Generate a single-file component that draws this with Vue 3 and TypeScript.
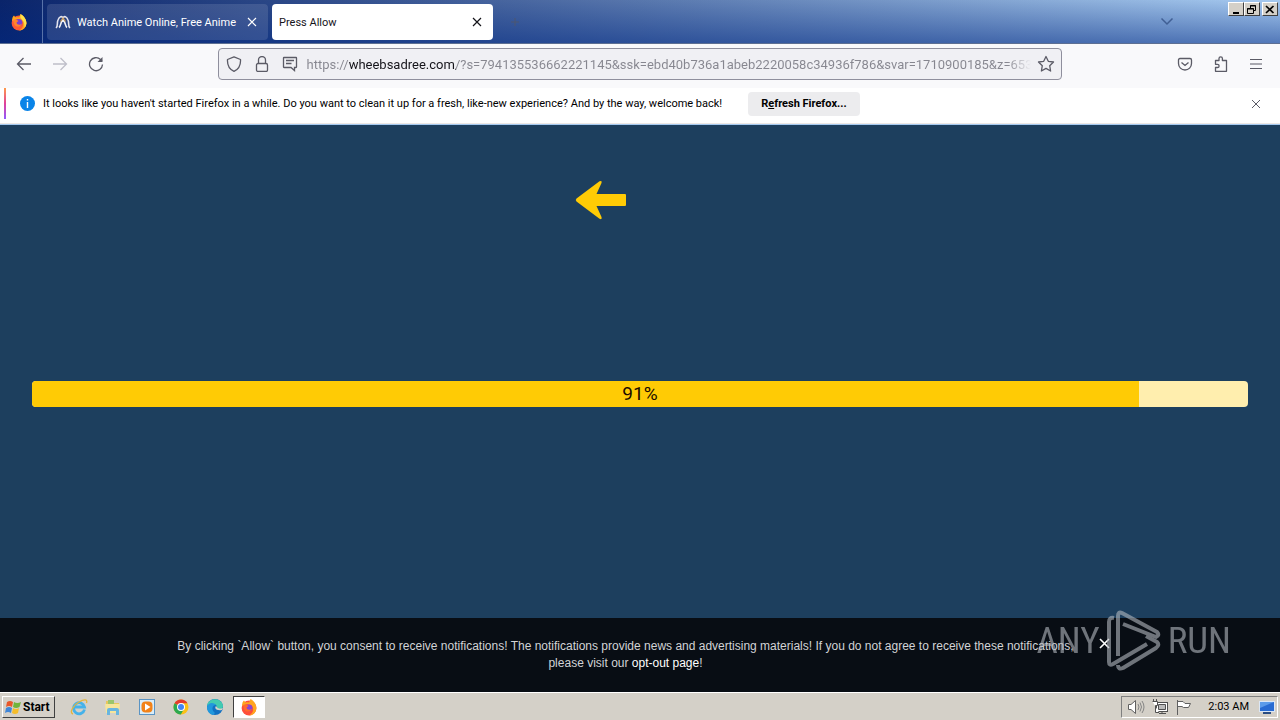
<script setup lang="ts">
import { ref } from 'vue'

const progress = ref(91)
const url = ref('https://wheebsadree.com/?s=794135536662221145&ssk=ebd40b736a1abeb2220058c34936f786&svar=1710900185&z=6534')
</script>

<template>
  <div class="desktop">
    <header class="tabbar">
      <div class="view">
        <svg width="18" height="18" viewBox="0 0 18 18">
          <circle cx="9" cy="10" r="7.4" fill="#ff5a36" />
          <path d="M2 8C2 5 3 3 4 2.500L5.500 4.500C7 4 8 4 9 4.500L10.500 1C13.500 2.500 16.500 6 16.400 10.500C16 15 12.500 17.500 9 17.500C13 15.500 14 12 12.500 8.500L11 7L7 6L4.500 7Z" fill="#ffa51f" />
          <path d="M10.500 1C13.500 2.500 16.500 6 16.400 10.500C16 12.500 15.500 13.500 14.500 14.500C15 10 13 7 10.500 5Z" fill="#ffe14a" />
          <circle cx="8.800" cy="9.600" r="3.500" fill="#7b3fd0" />
          <path d="M3 7C5 6 7 6.500 8.500 8L6.500 9.500C7 12 10 12.500 12 10.500C11 14 6 15 4 11Z" fill="#ff842c" />
        </svg>
      </div>
      <div class="tab tab-idle">
        <svg class="favicon" width="16" height="16" viewBox="0 0 16 16" fill="none">
          <path d="M1 14C3.500 12 1.500 9 3 6C4.500 2 7 2 8 4C9 2 11.500 2 13 6C14.500 9 12.500 12 15 14" stroke="#e4e4ee" stroke-width="1.600" />
          <path d="M4 13.500C6 12 5 9 8 6C11 9 10 12 12 13.500" stroke="#f2f2f6" stroke-width="1.600" />
          <path d="M5.500 7.500L8 4L10.500 7.500" stroke="#cf9d56" stroke-width="1.200" />
        </svg>
        <span class="tab-title">Watch Anime Online, Free Anime</span>
        <button class="icon-btn" aria-label="Close tab">
          <svg width="10" height="10" viewBox="0 0 10 10"><path d="M1 1L9 9M9 1L1 9" stroke="currentColor" stroke-width="1.200" /></svg>
        </button>
      </div>
      <div class="tab tab-active">
        <span class="tab-title">Press Allow</span>
        <button class="icon-btn" aria-label="Close tab">
          <svg width="10" height="10" viewBox="0 0 10 10"><path d="M1 1L9 9M9 1L1 9" stroke="currentColor" stroke-width="1.200" /></svg>
        </button>
      </div>
      <button class="icon-btn new-tab" aria-label="New tab">
        <svg width="12" height="12" viewBox="0 0 12 12"><path d="M6 2V10M2 6H10" stroke="currentColor" /></svg>
      </button>
      <button class="icon-btn list-tabs" aria-label="List all tabs">
        <svg width="14" height="9" viewBox="0 0 14 9" fill="none"><path d="M1.500 1.500L7 7L12.500 1.500" stroke="currentColor" stroke-width="1.500" /></svg>
      </button>
      <div class="window-buttons">
        <button class="win" aria-label="Minimize"><svg width="10" height="9" viewBox="0 0 10 9"><path d="M2 8H8" stroke="#000" stroke-width="2" /></svg></button>
        <button class="win" aria-label="Restore"><svg width="10" height="9" viewBox="0 0 10 9" fill="none" stroke="#000"><path d="M3.500 3V.500H8.500V5.500H7M3 1H9M.500 3.500H6.500V8.500H.500ZM0 4H7" /></svg></button>
        <button class="win win-close" aria-label="Close"><svg width="10" height="9" viewBox="0 0 10 9"><path d="M1 1L8.500 8M8.500 1L1 8" stroke="#000" stroke-width="1.700" /></svg></button>
      </div>
    </header>

    <nav class="toolbar">
      <div class="nav-buttons">
        <button class="icon-btn" aria-label="Back"><svg width="16" height="16" viewBox="0 0 16 16" fill="none" stroke="currentColor" stroke-width="1.300"><path d="M15 8H1.500M7.500 2L1.500 8L7.500 14" /></svg></button>
        <button class="icon-btn" aria-label="Forward" disabled><svg width="16" height="16" viewBox="0 0 16 16" fill="none" stroke="currentColor" stroke-width="1.300"><path d="M1 8H14.500M8.500 2L14.500 8L8.500 14" /></svg></button>
        <button class="icon-btn" aria-label="Reload"><svg width="16" height="16" viewBox="0 0 16 16" fill="none" stroke="currentColor" stroke-width="1.300"><path d="M14.500 8.500A6.500 6.500 0 1 1 12.500 3.500L14 5" /><path d="M14.500 1V6H9.500Z" fill="currentColor" stroke="none" /></svg></button>
      </div>
      <div class="urlbar">
        <svg width="16" height="16" viewBox="0 0 16 16" fill="none" stroke="currentColor" stroke-width="1.300"><path d="M8 .800L14.500 3.500C14.800 8.500 13 13 8 15.300C3 13 1.200 8.500 1.500 3.500Z" stroke-linejoin="round" /></svg>
        <svg width="16" height="16" viewBox="0 0 16 16" fill="none" stroke="currentColor" stroke-width="1.300"><rect x="2.500" y="7.500" width="11" height="8" rx="1.500" /><path d="M4.500 7.500V4A3.500 3.500 0 0 1 11.500 4V7.500" /></svg>
        <svg width="16" height="16" viewBox="0 0 16 16" fill="none" stroke="currentColor" stroke-width="1.300"><path d="M2 1.500H14Q14.500 1.500 14.500 2V11Q14.500 11.500 14 11.500H12.500V14.500L9 11.500H2Q1.500 11.500 1.500 11V2Q1.500 1.500 2 1.500ZM4 4.500H12M4 7.500H9.500" /></svg>
        <input v-model="url" class="url" type="text" aria-label="Address" spellcheck="false" />
        <button class="icon-btn" aria-label="Bookmark this page"><svg width="18" height="18" viewBox="0 0 18 18" fill="none" stroke="currentColor" stroke-width="1.300" stroke-linejoin="round"><path d="M9 1.500L11.300 6.300L16.500 7L12.700 10.700L13.600 16L9 13.400L4.400 16L5.300 10.700L1.500 7L6.700 6.300Z" /></svg></button>
      </div>
      <div class="tools">
        <button class="icon-btn" aria-label="Save to Pocket"><svg width="16" height="16" viewBox="0 0 16 16" fill="none" stroke="currentColor" stroke-width="1.300"><path d="M3 2.500H13Q14.500 2.500 14.500 4V7.500A6.500 6.500 0 0 1 1.500 7.500V4Q1.500 2.500 3 2.500ZM4.500 6.500L8 9.500L11.500 6.500" /></svg></button>
        <button class="icon-btn" aria-label="Extensions"><svg width="16" height="16" viewBox="0 0 16 16" fill="none" stroke="currentColor" stroke-width="1.300"><path d="M2.500 4.500H6V2.500A1.700 1.700 0 0 1 9.400 2.500V4.500H13.500V15.300H2.500V11.500H4.500A1.600 1.600 0 0 0 4.500 8.300H2.500Z" stroke-linejoin="round" /></svg></button>
        <button class="icon-btn" aria-label="Menu"><svg width="14" height="12" viewBox="0 0 14 12" stroke="currentColor" stroke-width="1.200"><path d="M1 1.500H13M1 6H13M1 10.500H13" /></svg></button>
      </div>
    </nav>

    <section class="notice">
      <div class="accent"></div>
      <svg class="info" width="15" height="15" viewBox="0 0 15 15"><circle cx="7.500" cy="7.500" r="7.500" fill="#0a84e8" /><path d="M7.500 3V4.500M7.500 6V12" stroke="#fff" stroke-width="1.400" /></svg>
      <span>It looks like you haven't started Firefox in a while. Do you want to clean it up for a fresh, like-new experience? And by the way, welcome back!</span>
      <button class="refresh">R<u>e</u>fresh Firefox...</button>
      <button class="icon-btn dismiss" aria-label="Dismiss">
        <svg width="10" height="10" viewBox="0 0 10 10"><path d="M1 1L9 9M9 1L1 9" stroke="currentColor" /></svg>
      </button>
    </section>

    <main class="page">
      <div class="arrow">
        <svg width="52" height="40" viewBox="0 0 52 40"><path d="M1.500 18.500L24.500 1.200Q27.500 .300 26.500 3L21.500 14H50Q51 14 51 15V25Q51 26 50 26H21.500L26.500 37Q27.500 40 24.500 38.800L1.500 21.500Q0 20 1.500 18.500Z" fill="#ffcb05" /></svg>
      </div>
      <div class="meter" role="progressbar" :aria-valuenow="progress" aria-label="Loading">
        <div class="fill" :style="{ width: progress + '%' }"></div>
        <span class="percent">{{ progress }}%</span>
      </div>
    </main>

    <section class="consent">
      <p>By clicking `Allow` button, you consent to receive notifications! The notifications provide news and advertising materials! If you do not agree to receive these notifications, please visit our <a href="#">opt-out page</a>!</p>
      <button class="icon-btn consent-close" aria-label="Close">
        <svg width="11" height="11" viewBox="0 0 11 11"><path d="M1 1L10 10M10 1L1 10" stroke="currentColor" stroke-width="1.600" /></svg>
      </button>
      <div class="watermark">
        <span>ANY</span>
        <svg width="56" height="62" viewBox="0 0 56 62" fill="none" stroke="currentColor" stroke-width="4" stroke-linejoin="round">
          <path d="M8 8Q3 7 3 12V52Q3 56 7 54L41 34" />
          <path d="M12 46V6Q12 1 16 3L51 22Q54 25 50 27L17 14" />
          <path d="M40 26L51 32Q54 35 50 38L17 58Q12 60 12 55" />
        </svg>
        <span>RUN</span>
      </div>
    </section>

    <footer class="taskbar">
      <button class="start">
        <svg width="17" height="16" viewBox="0 0 17 16"><path d="M2 3Q5 1 8 3L7 8Q4 6 1 8Z" fill="#e8572a" /><path d="M9 3Q12 5 16 3L14.500 8Q11 10 8 8Z" fill="#71b43b" /><path d="M1 9Q4 7 7 9L6 14Q3 12 0 14Z" fill="#3f86d8" /><path d="M8 9Q11 11 14 9L13 14Q10 16 7 14Z" fill="#f5bd2b" /></svg>
        Start
      </button>
      <div class="quick">
        <button class="task" aria-label="Internet Explorer"><svg width="18" height="18" viewBox="0 0 18 18" fill="none"><path d="M14.500 11.500A5.500 5.500 0 1 1 14.500 9H5" stroke="#45b2ea" stroke-width="2.800" /><path d="M3 16C-1 15 3 7 9 4C14 1 18 1 16.500 5" stroke="#e4b53c" stroke-width="1.300" /></svg></button>
        <button class="task" aria-label="Explorer"><svg width="18" height="18" viewBox="0 0 18 18"><path d="M2 3H7L8 5H15V14H2Z" fill="#e8c65c" /><path d="M4 2H10V6H4Z" fill="#9ac56b" /><path d="M1 6H16L15 15H2Z" fill="#f6e59b" /><path d="M3 17V12Q3 10 5 10H13Q15 10 15 12V17H12V13H6V17Z" fill="#69b5df" /></svg></button>
        <button class="task" aria-label="Media Player"><svg width="18" height="18" viewBox="0 0 18 18"><rect x="1.500" y="1.500" width="15" height="15" fill="#d9edf9" stroke="#5a94c4" /><rect x="3.500" y="3.500" width="11" height="11" rx="4" fill="#f28218" /><path d="M7 5.500L12.500 9L7 12.500Z" fill="#fff" /></svg></button>
        <button class="task" aria-label="Chrome"><svg width="18" height="18" viewBox="0 0 18 18"><circle cx="9" cy="9" r="7.500" fill="#fbc116" /><path d="M9 9L2.500 5.200A7.500 7.500 0 0 1 15.500 5.200H9Z" fill="#e33b2e" /><path d="M9 9L2.500 5.200A7.500 7.500 0 0 0 8.800 16.500L12 11Z" fill="#2da94f" /><circle cx="9" cy="9" r="4" fill="#fff" /><circle cx="9" cy="9" r="3" fill="#4285f4" /></svg></button>
        <button class="task" aria-label="Edge"><svg width="18" height="18" viewBox="0 0 18 18"><circle cx="9" cy="9" r="8" fill="#1271c2" /><path d="M1 8C2 -1 16 -1 17 8C17 12 12 13 10 11C12 8 10 6 7 6C4 6 2 7 1 8Z" fill="#43cbb0" /><path d="M1 9C2 4 8 4 10 7C6 7 5 12 9 15L7 17C3 16 1 13 1 9Z" fill="#2198dc" /><path d="M10 8C8 10 10 13 16 12L17 10Q12 12 10 8Z" fill="#d5d0c8" /></svg></button>
        <button class="task task-on" aria-label="Firefox"><svg width="18" height="18" viewBox="0 0 18 18"><circle cx="9" cy="10" r="7.400" fill="#ff4f3a" /><path d="M2 8C2 5 3 3 4 2.500L5.500 4.500C7 4 8 4 9 4.500L10.500 1C13.500 2.500 16.500 6 16.400 10.500C16 15 12.500 17.500 9 17.500C13 15.500 14 12 12.500 8.500L11 7L7 6L4.500 7Z" fill="#ffa51f" /><circle cx="9" cy="9.800" r="3.400" fill="#8a45d0" /><path d="M3 7C5 6 7 6.500 8.500 8L6.500 9.500C7 12 10 12.500 12 10.500C11 14 6 15 4 11Z" fill="#ff6a2c" /></svg></button>
      </div>
      <div class="tray">
        <svg width="18" height="16" viewBox="0 0 18 16" fill="#fff" stroke="#606060"><path d="M1.500 5.500H4L8.500 1.500V14.500L4 10.500H1.500Z" /><path d="M11 5Q13 8 11 11M13 3.500Q16 8 13 12.500M15 2Q19 8 15 14" fill="none" stroke="#858585" /></svg>
        <svg width="18" height="16" viewBox="0 0 18 16" fill="#fff" stroke="#505050"><rect x="5.500" y="3.500" width="11" height="9" /><path d="M7.500 5.500H14.500V10.500H7.500Z" fill="#bbb" /><path d="M8 14.500H15M11 12.500V15M1.500 2.500H6.500V6.500H4.500V13.500H8M2.500 0V3M5.500 0V3" /></svg>
        <svg width="18" height="16" viewBox="0 0 18 16" fill="#fff" stroke="#606060"><path d="M2.500 1V16M3 2.500H8L10 4.500H15.500L13.500 8.500H8.500L7 7.500H3" /></svg>
        <span class="clock">2:03 AM</span>
        <svg width="16" height="14" viewBox="0 0 16 14"><rect x=".500" y="1.500" width="15" height="10" fill="#286bd2" stroke="#dbe7f6" /><path d="M1 2H15L1 8Z" fill="#5b9bea" /><path d="M4 13H12" stroke="#2a4c82" stroke-width="2" /></svg>
      </div>
    </footer>
  </div>
</template>

<style>
body { margin: 0; }
</style>

<style scoped>
* { box-sizing: border-box; }
.desktop { min-height: 100vh; display: flex; flex-direction: column; background: #1d3f5e; color: #15141a; font: 11px/16px Roboto, "DejaVu Sans", sans-serif; }
button { font: inherit; color: inherit; }
svg { display: block; flex: none; }
.icon-btn { display: grid; place-items: center; padding: 0; border: 0; background: none; }
.tabbar { height: 44px; display: flex; align-items: center; background: linear-gradient(rgba(0, 40, 130, 0), rgba(0, 40, 130, 0.5)), linear-gradient(90deg, #0a246a, #a6caf0); border-bottom: 1px solid #5d6f92; }
.view { width: 43px; height: 100%; display: grid; place-items: center; padding-right: 4px; border-right: 1px solid #5872a8; }
.tab { width: 221px; height: 36px; display: flex; align-items: center; margin-left: 4px; padding: 0 11px 0 7px; border-radius: 4px; }
.tab-title { flex: 1; padding-top: 2px; white-space: nowrap; }
.tab-idle { color: #fff; background: rgba(255, 255, 255, 0.12); }
.favicon { margin: 0 6px 0 1px; }
.tab-active { background: #fff; }
.new-tab { margin-left: 16px; color: #4d5770; }
.list-tabs { margin-left: auto; color: #405f94; }
.window-buttons { align-self: flex-start; display: flex; margin: 2px 2px 0 54px; }
.win { width: 16px; height: 14px; padding: 1px 2px; background: #d4d0c8; border: 1px solid; border-color: #fff #404040 #404040 #fff; }
.win-close { margin-left: 2px; }
.toolbar { height: 44px; display: flex; align-items: center; justify-content: space-between; padding: 0 17px 4px 16px; background: #f9f9fb; color: #5b5b66; }
.nav-buttons, .tools { width: 200px; display: flex; align-items: center; gap: 20px; }
.nav-buttons .icon-btn:disabled { color: #bfbfc9; }
.tools { justify-content: flex-end; }
.urlbar { width: 844px; min-width: 0; height: 32px; display: flex; align-items: center; gap: 12px; padding: 0 6px 0 7px; border: 1px solid #8f8f9d; border-radius: 4px; background: #f0f0f4; }
.url { flex: 1; min-width: 0; margin-left: -3px; margin-right: -6px; padding: 2px 0 0; border: 0; outline: 0; font: 13px/20px Roboto, "DejaVu Sans", sans-serif; color: transparent; background: linear-gradient(90deg, #86868f 42px, #15141a 42px 149px, #86868f 149px calc(100% - 24px), transparent); background-clip: text; }
.notice { height: 36px; display: flex; align-items: center; padding: 0 19px 4px 4px; background: #fff; border-bottom: 1px solid #ece7e4; color: #000; white-space: nowrap; }
.accent { width: 2px; align-self: stretch; background: linear-gradient(#ff9a4a, #e0409a, #9059ff); }
.info { margin: 0 8px 0 14px; }
.refresh { height: 24px; margin-left: 26px; padding: 0 13px; border: 0; border-radius: 4px; background: #ececee; font-weight: bold; }
.dismiss { margin-left: auto; color: #5b5b66; }
.page { flex: 1; padding: 55px 32px 0; border-top: 1px solid #a6caf0; }
.arrow { display: flex; justify-content: center; padding-right: 78px; }
.meter { position: relative; height: 26px; margin-top: 161px; border-radius: 4px; overflow: hidden; background: #ffeeae; }
.fill { height: 100%; background: #ffcb05; }
.percent { position: absolute; inset: 0; text-align: center; font-size: 19px; line-height: 26px; color: #200b00; }
.consent { position: relative; min-height: 74px; display: flex; justify-content: center; align-items: flex-start; gap: 18px; padding: 20px 32px; background: #080d14; color: #d2d3d6; font: 12px/17px "Liberation Sans", Arial, sans-serif; }
.consent p { width: 910px; margin: 0; text-align: center; }
.consent a { color: #fff; text-decoration: none; }
.consent-close { color: #fff; }
.watermark { position: absolute; right: 49px; bottom: 20px; display: flex; align-items: center; gap: 6px; color: #b4b9c0; opacity: 0.6; font: 37px/44px "Roboto Condensed", Roboto, sans-serif; pointer-events: none; }
.taskbar { height: 28px; display: flex; align-items: center; padding: 2px; background: #d4d0c8; border-top: 1px solid #fff; color: #000; }
.start { width: 53px; height: 22px; display: flex; align-items: center; gap: 1px; padding: 0 2px; border: 1px solid; border-color: #fff #404040 #404040 #fff; background: #d4d0c8; font-size: 12px; font-weight: bold; }
.quick { display: flex; gap: 2px; margin-left: 8px; }
.task { width: 32px; height: 22px; display: grid; place-items: center; padding: 0; border: 1px solid transparent; background: none; }
.task-on { background: #fff; border-color: #404040 #fff #fff #404040; }
.tray { height: 22px; display: flex; align-items: center; gap: 6px; margin-left: auto; padding: 0 2px 0 5px; border: 1px solid; border-color: #808080 #fff #fff #808080; }
.clock { margin: 0 4px 0 9px; white-space: nowrap; }
</style>
